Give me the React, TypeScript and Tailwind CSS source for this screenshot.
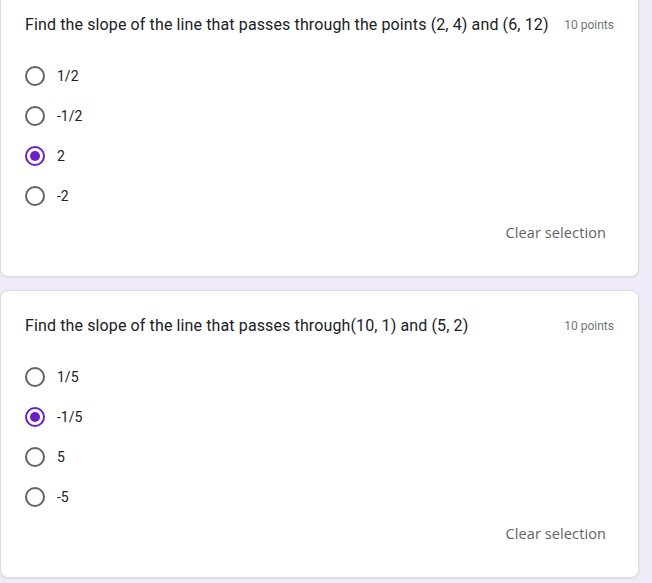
import React from "react"

const questions = [
  {
    title: "Find the slope of the line that passes through the points (2, 4) and (6, 12)",
    options: ["1/2", "-1/2", "2", "-2"],
    selected: 2,
  },
  {
    title: "Find the slope of the line that passes through(10, 1) and (5, 2)",
    options: ["1/5", "-1/5", "5", "-5"],
    selected: 1,
  },
]

function Radio({ checked }: { checked: boolean }) {
  if (checked) {
    return (
      <div className="flex h-5 w-5 items-center justify-center rounded-full border-2 border-[#6a1fc2]">
        <div className="h-[10px] w-[10px] rounded-full bg-[#6a1fc2]" />
      </div>
    )
  }
  return <div className="h-5 w-5 rounded-full border-2 border-[#5f6368]" />
}

function QuestionCard({ title, options, selected }: (typeof questions)[number]) {
  return (
    <div className="w-[639px] rounded-lg border border-[#dadce0] bg-white pt-[23px] pb-[33px] pl-6 pr-6 shadow-[0_1px_2px_rgba(0,0,0,0.06)]">
      <div className="flex items-start justify-between gap-2">
        <div className="whitespace-nowrap text-base leading-6 tracking-[0.12px] text-[#202124]">{title}</div>
        <div className="shrink-0 text-xs leading-6 text-[#70757a]">10 points</div>
      </div>
      <div className="mt-[19px] flex flex-col">
        {options.map((opt, i) => (
          <div key={opt} className="flex h-10 items-center gap-3">
            <Radio checked={i === selected} />
            <span className="text-sm text-[#202124]">{opt}</span>
          </div>
        ))}
      </div>
      <div className="mt-[7px] flex justify-end">
        <span className="px-2 font-['Open_Sans',sans-serif] text-[14.5px] leading-5 font-medium tracking-[0.1px] text-[#5f6368]">
          Clear selection
        </span>
      </div>
    </div>
  )
}

export default function App() {
  return (
    <div className="h-[583px] w-[652px] overflow-hidden bg-[#f0ebf8] font-['Roboto',sans-serif]">
      <div className="-mt-[11px] flex flex-col gap-[13px]">
        {questions.map((q) => (
          <QuestionCard key={q.title} {...q} />
        ))}
      </div>
    </div>
  )
}
